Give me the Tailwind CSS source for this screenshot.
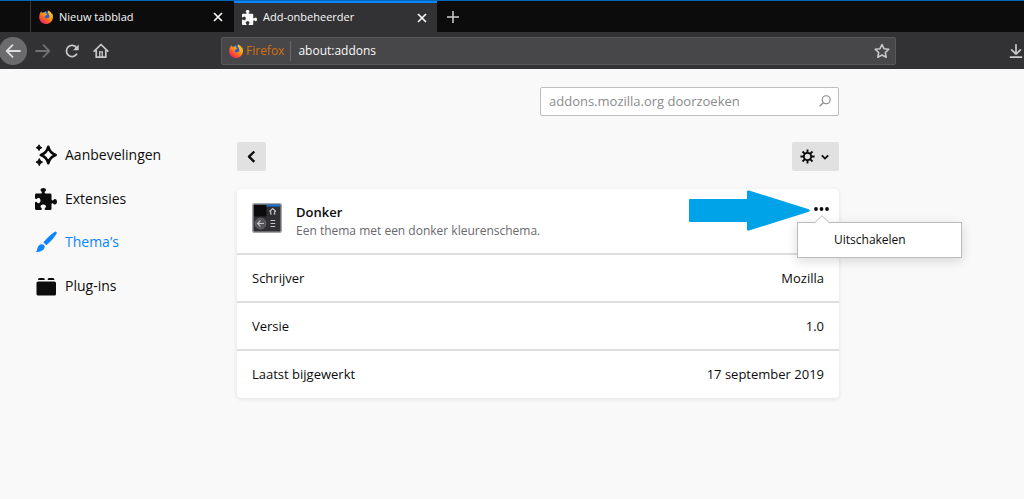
<!DOCTYPE html>
<html lang="nl">
<head>
<meta charset="utf-8">
<meta name="viewport" content="width=device-width, initial-scale=1">
<title>Add-onbeheerder</title>
<script src="https://cdn.jsdelivr.net/npm/@tailwindcss/browser@4"></script>
</head>
<body class="min-h-screen overflow-x-hidden bg-[#f9f9fa] font-['Open_Sans','Noto_Sans',sans-serif] text-[#0c0c0d]">
<svg class="absolute size-0" aria-hidden="true">
  <defs>
    <linearGradient id="flame" x1="0.9" y1="0" x2="0.2" y2="1">
      <stop offset="0" stop-color="#ffe226"/><stop offset="0.45" stop-color="#ff9616"/><stop offset="0.75" stop-color="#ff4a30"/><stop offset="1" stop-color="#e31587"/>
    </linearGradient>
    <symbol id="firefox" viewBox="0 0 16 16">
      <circle cx="8" cy="7.5" r="6" fill="#2b5fd0"/>
      <path fill="url(#flame)" d="M1.6 3.2C2 2.4 2.3 1.8 2.8 1.5c0 .7.2 1.200.6 1.700 1-.3 2-.2 2.700.1C6.800 2.300 7.600 1.900 8.500 1.700 7.600 2.600 7.500 3.500 7.900 4.200L9.400 4.700C9.300 5.500 8.500 5.700 7.600 6.200 7.600 7 7.300 7.300 6.600 7.200 6.100 8.300 6.900 9.300 8 9.400c1.500.2 2.300-.6 3.300-.2C12.300 6.600 11.500 4.500 10 3 10.400 2 10.300 1 9.900.2c2.300.9 4 2.400 4.700 4.300.3-.2.400-.5.400-.9.900 1.900 1 3.600.9 4.900C15.500 12.900 12.100 16 8 16 3.400 16 .2 12.500.2 8.300.2 6.300.7 4.600 1.600 3.200z"/>
    </symbol>
    <symbol id="puzzle" viewBox="0 0 16 16">
      <path fill="currentColor" d="M14.500 8c-.971 0-1 1-1.750 1a.765.765 0 0 1-.75-.75V5a1 1 0 0 0-1-1H7.750A.765.765 0 0 1 7 3.250c0-.75 1-.779 1-1.750C8 .635 7.100 0 6 0S4 .635 4 1.500c0 .971 1 1 1 1.750a.765.765 0 0 1-.75.750H1a1 1 0 0 0-1 1v2.250A.765.765 0 0 0 .75 8c.75 0 .779-1 1.750-1C3.365 7 4 7.900 4 9s-.635 2-1.500 2c-.971 0-1-1-1.750-1a.765.765 0 0 0-.75.750V15a1 1 0 0 0 1 1h3.250a.765.765 0 0 0 .75-.75c0-.75-1-.779-1-1.750 0-.865.900-1.500 2-1.500s2 .635 2 1.500c0 .971-1 1-1 1.750a.765.765 0 0 0 .75.750H11a1 1 0 0 0 1-1v-3.250a.765.765 0 0 1 .75-.75c.75 0 .779 1 1.750 1 .865 0 1.500-.9 1.500-2s-.635-2-1.500-2z"/>
    </symbol>
    <symbol id="close" viewBox="0 0 10 10"><path d="M1 1l8 8M9 1l-8 8" fill="none" stroke="currentColor" stroke-width="1.700"/></symbol>
    <symbol id="back" viewBox="0 0 16 16"><path d="M15 8H1.800M7.500 2.200L1.700 8l5.800 5.800" fill="none" stroke="currentColor" stroke-width="1.800" stroke-linecap="round" stroke-linejoin="round"/></symbol>
  </defs>
</svg>

<header class="border-t border-[#0067b5] bg-[#323234] text-[#f9f9fa]">
  <div class="flex h-[31px] items-stretch bg-[#0c0c0d] pl-[30px]">
    <div class="flex w-[204px] items-center border-l border-[#38383d] pt-px pr-[10px] pl-2">
      <svg class="mr-[6px] size-[14px]"><use href="#firefox"/></svg>
      <button class="flex-1 text-left text-[11px] whitespace-nowrap">Nieuw tabblad</button>
      <button aria-label="Tabblad sluiten" class="p-px"><svg class="size-[10px]"><use href="#close"/></svg></button>
    </div>
    <div class="flex w-[203px] items-center border-t-2 border-[#0a84ff] bg-[#323234] pr-[9px] pl-2">
      <svg class="mr-[6px] size-[15px]"><use href="#puzzle"/></svg>
      <button class="flex-1 text-left text-[11px] whitespace-nowrap">Add-onbeheerder</button>
      <button aria-label="Tabblad sluiten" class="p-px"><svg class="size-[10px]"><use href="#close"/></svg></button>
    </div>
    <button aria-label="Nieuw tabblad openen" class="px-[9px] text-[#d0d0d2]">
      <svg class="size-[14px]" viewBox="0 0 14 14"><path d="M7 1v12M1 7h12" stroke="currentColor" stroke-width="1.500"/></svg>
    </button>
  </div>
  <div class="flex h-[37px] items-center text-[#c8c8ca]">
    <button aria-label="Terug" class="-ml-px flex size-7 shrink-0 items-center justify-center rounded-full bg-[#6b6b6d] text-[#dededf]"><svg class="size-4"><use href="#back"/></svg></button>
    <button aria-label="Vooruit" class="ml-2 text-[#717173]"><svg class="size-4 -scale-x-100"><use href="#back"/></svg></button>
    <button aria-label="Vernieuwen" class="ml-[14px]">
      <svg class="size-[14px]" viewBox="0 0 14 14"><path d="M11.600 10.200A5.600 5.600 0 1 1 11.500 3.600" fill="none" stroke="currentColor" stroke-width="1.800" stroke-linecap="round"/><path d="M13.700.4v5.400a.4.400 0 0 1-.4.400H8z" fill="currentColor"/></svg>
    </button>
    <button aria-label="Startpagina" class="ml-[14px]">
      <svg class="size-4" viewBox="0 0 16 16"><path d="M1.200 8.200L8 1.500l6.800 6.700M3.200 7.500v6.700h9.600V7.500" fill="none" stroke="currentColor" stroke-width="1.700" stroke-linecap="round" stroke-linejoin="round"/><path d="M6.700 14V8.800h2.600V14" fill="none" stroke="currentColor" stroke-width="1.300"/></svg>
    </button>
    <div class="ml-28 flex h-7 flex-1 items-center rounded-xs border border-[#58585a] bg-[#474749] pr-[5px] pl-[7px]">
      <svg class="mr-[3px] size-[14px] shrink-0"><use href="#firefox"/></svg>
      <span class="text-xs text-[#d5700e]">Firefox</span>
      <input aria-label="Adres" value="about:addons" class="ml-[6px] h-5 min-w-0 flex-1 border-l border-[#68686a] pl-[7px] text-xs text-[#f9f9fa] outline-none">
      <button aria-label="Bladwijzer maken">
        <svg class="size-4" viewBox="0 0 16 16"><path d="M8 1.500l2 4.200 4.700.6-3.400 3.200.9 4.700L8 12l-4.200 2.200.9-4.700L1.300 6.300 6 5.700z" fill="none" stroke="currentColor" stroke-width="1.600" stroke-linejoin="round"/></svg>
      </button>
    </div>
    <button aria-label="Downloads" class="mr-px ml-[113px]">
      <svg class="size-[14px]" viewBox="0 0 14 14"><path d="M7 .8v9M2.600 5.800L7 10.200l4.400-4.400M1.500 13.200h11" fill="none" stroke="currentColor" stroke-width="1.700" stroke-linecap="round" stroke-linejoin="round"/></svg>
    </button>
  </div>
</header>

<div class="flex pt-[18px]">
  <nav class="w-[237px] shrink-0 pt-[46px] pl-[35px] text-sm">
    <ul class="flex flex-col">
      <li><a href="#aanbevelingen" class="flex h-11 items-center gap-2">
        <svg class="size-[22px]" viewBox="0 0 22 22"><path d="M13.300 2.800q1.400 6 7.300 8.200-5.900 2.200-7.300 8.200-1.400-6-7.300-8.200 5.900-2.200 7.300-8.200z" fill="none" stroke="currentColor" stroke-width="2.700" stroke-linejoin="round"/><path d="M4 .8q.6 2.300 2.900 2.900Q4.600 4.300 4 6.600 3.400 4.300 1.100 3.700 3.400 3.100 4 .8zM4.300 14.600q.7 2.800 3.300 3.500-2.600.7-3.300 3.500-.7-2.800-3.300-3.500 2.600-.7 3.300-3.500z" fill="currentColor" stroke="currentColor" stroke-width="1"/></svg>
        Aanbevelingen</a></li>
      <li><a href="#extensies" class="flex h-[43px] items-center gap-2"><svg class="size-[22px]"><use href="#puzzle"/></svg>Extensies</a></li>
      <li><a href="#themas" aria-current="page" class="flex h-11 items-center gap-2 text-[#0a84ff]">
        <svg class="size-[22px]" viewBox="0 0 22 22"><path d="M21.300.9c.7.500.6 1.300.2 1.900-2.500 4-5.800 7.900-10.200 11.500L8.300 11.300C12.200 7.100 16 3.300 20 .8q.7-.4 1.300.1z" fill="currentColor"/><path d="M7.200 13.200q3 .8 2.400 3.400C8.700 19.900 4.700 21.300.6 21c1.400-.9 1.400-2 1.900-4 .7-2.500 2.400-4 4.700-3.800z" fill="currentColor"/></svg>
        Thema’s</a></li>
      <li><a href="#plug-ins" class="flex h-[43px] items-center gap-2">
        <svg class="size-[22px]" viewBox="0 0 22 22"><rect x="1.500" y="6.500" width="19.500" height="14" rx="1.600" fill="currentColor"/><path d="M3 5q0-2 1.600-2h3.600q1.700 0 1.700 2zM12.600 5q0-2 1.600-2h3.600q1.700 0 1.700 2z" fill="currentColor"/></svg>
        Plug-ins</a></li>
    </ul>
  </nav>

  <main class="max-w-[602px] flex-1">
    <form class="flex justify-end">
      <label class="flex h-[29px] w-[299px] items-center rounded-xs border border-[#bebebf] bg-white pr-[7px] pl-2">
        <input type="search" aria-label="addons.mozilla.org doorzoeken" placeholder="addons.mozilla.org doorzoeken" class="min-w-0 flex-1 pt-px text-[13px] outline-none placeholder:text-[#8b8b8d]">
        <svg class="mb-px size-3 shrink-0 text-[#858587]" viewBox="0 0 12 12"><circle cx="7.200" cy="4.800" r="4" fill="none" stroke="currentColor" stroke-width="1.100"/><path d="M4.300 7.700L.6 11.400" stroke="currentColor" stroke-width="1.300"/></svg>
      </label>
    </form>

    <div class="mt-[26px] flex justify-between">
      <button aria-label="Terug" class="flex size-[29px] items-center justify-center rounded-xs bg-[#e1e1e2]">
        <svg class="size-[14px]" viewBox="0 0 14 14"><path d="M9.300 1.500L4 6.700l5.300 5.200" fill="none" stroke="currentColor" stroke-width="2.400" stroke-linejoin="round"/></svg>
      </button>
      <button aria-label="Hulpmiddelen voor alle add-ons" class="flex h-[29px] w-[47px] items-center gap-[6px] rounded-xs bg-[#e1e1e2] pl-2">
        <svg class="size-[15px]" viewBox="0 0 16 16" fill="none" stroke="currentColor" stroke-width="2"><circle cx="8" cy="8" r="3.900"/><path d="M8 4V.5M8 12v3.500M4 8H.5M12 8h3.500M5.200 5.200L2.700 2.700M10.800 10.800l2.500 2.500M5.200 10.800l-2.500 2.500M10.800 5.200l2.500-2.500"/></svg>
        <svg class="size-2" viewBox="0 0 8 8"><path d="M.8 2.400L4 5.600l3.200-3.200" fill="none" stroke="currentColor" stroke-width="1.800"/></svg>
      </button>
    </div>

    <section class="relative mt-[18px] rounded-sm bg-white shadow-[0_1px_4px_#0c0c0d1a]">
      <div class="flex h-16 items-start pt-[14px] pr-2 pl-[15px]">
        <svg class="size-[30px] shrink-0" viewBox="0 0 30 30"><rect x=".75" y=".75" width="28.500" height="28.500" rx="1.500" fill="#303033" stroke="#a5a5ab" stroke-width="1.500"/><path d="M2 2h12.500v11.500H2z" fill="#0b0b0d"/><path d="M14.500 1.500H28v2H14.500z" fill="#1976d2"/><circle cx="8.500" cy="20.500" r="5.400" fill="#555558" stroke="#77777a" stroke-width=".7"/><path d="M12 20.500H5.500M8.500 17.500l-3 3 3 3M17.500 8.500l3.200-3L23.900 8.500M18.700 8v3h1.100M22.700 8v3h-1.100M18.500 17.500h4.700M18.500 20.500h4.700M18.500 23.500h4.700" fill="none" stroke="#c4c4c8" stroke-width="1.100"/></svg>
        <div class="ml-[14px] flex-1">
          <h1 class="text-[13px] leading-[18px] font-semibold">Donker</h1>
          <p class="text-xs leading-[19px] text-[#69696d]">Een thema met een donker kleurenschema.</p>
        </div>
        <div class="relative">
          <button aria-label="Meer opties" aria-expanded="true" class="flex h-3 w-5 items-center justify-center">
            <svg class="h-1 w-[15px]" viewBox="0 0 15 4" fill="currentColor"><circle cx="2" cy="2" r="1.900"/><circle cx="7.500" cy="2" r="1.900"/><circle cx="13" cy="2" r="1.900"/></svg>
          </button>
          <div role="menu" class="absolute top-[19px] -left-[14px] z-10 h-[36px] w-[165px] border border-[#bcbcbd] bg-white shadow-[0_3px_12px_#0c0c0d26]">
            <svg class="absolute -top-2 left-4 h-[9px] w-4" viewBox="0 0 16 9"><path d="M0 9V8.500L8 .7l8 7.800V9z" fill="#fff"/><path d="M.5 8L8 .7 15.500 8" fill="none" stroke="#bcbcbd"/></svg>
            <button role="menuitem" class="flex size-full items-center pl-9 text-xs">Uitschakelen</button>
          </div>
        </div>
      </div>
      <svg class="absolute top-px right-[29px] h-[41px] w-[121px]" viewBox="0 0 121 41" aria-hidden="true"><path d="M1 9H58V1.500Q58 0 60 .5L119 19q4 1.500 0 3L60 40.500Q58 41 58 39.500V32H1Q0 32 0 31V10Q0 9 1 9z" fill="#00a2e8"/></svg>
      <dl class="text-[13px]">
        <div class="flex h-12 items-center justify-between border-t-2 border-[#dededf] px-[15px] pt-[2px]"><dt>Schrijver</dt><dd>Mozilla</dd></div>
        <div class="flex h-12 items-center justify-between border-t-2 border-[#dededf] px-[15px] pt-[2px]"><dt>Versie</dt><dd>1.0</dd></div>
        <div class="flex h-[49px] items-center justify-between border-t-2 border-[#dededf] px-[15px]"><dt>Laatst bijgewerkt</dt><dd>17 september 2019</dd></div>
      </dl>
    </section>
  </main>
</div>
</body>
</html>
